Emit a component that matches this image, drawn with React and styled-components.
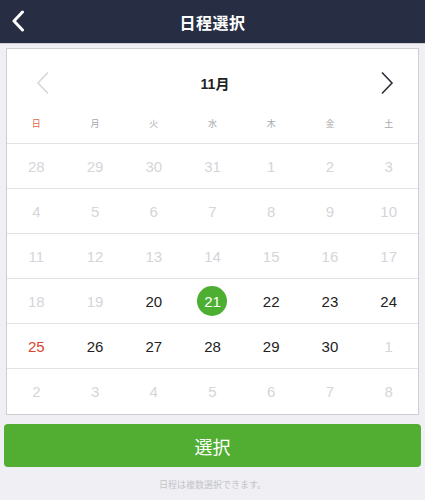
import React from 'react';
import styled, { createGlobalStyle } from 'styled-components';

const GlobalStyle = createGlobalStyle`
  html, body {
    margin: 0;
    padding: 0;
    background: #efeff4;
    font-family: "Liberation Sans", "Noto Sans CJK JP", sans-serif;
  }
  * {
    box-sizing: border-box;
  }
`;

const weekdays = ['日', '月', '火', '水', '木', '金', '土'];

const weeks = [
  [[28, 'off'], [29, 'off'], [30, 'off'], [31, 'off'], [1, 'off'], [2, 'off'], [3, 'off']],
  [[4, 'off'], [5, 'off'], [6, 'off'], [7, 'off'], [8, 'off'], [9, 'off'], [10, 'off']],
  [[11, 'off'], [12, 'off'], [13, 'off'], [14, 'off'], [15, 'off'], [16, 'off'], [17, 'off']],
  [[18, 'off'], [19, 'off'], [20, 'on'], [21, 'selected'], [22, 'on'], [23, 'on'], [24, 'on']],
  [[25, 'sunday'], [26, 'on'], [27, 'on'], [28, 'on'], [29, 'on'], [30, 'on'], [1, 'off']],
  [[2, 'off'], [3, 'off'], [4, 'off'], [5, 'off'], [6, 'off'], [7, 'off'], [8, 'off']],
];

function App() {
  return (
    <Page>
      <GlobalStyle />
      <NavBar>
        <BackButton>
          <svg width="14" height="22" viewBox="0 0 14 22">
            <path d="M11.5 2 L3 11 L11.5 20" fill="none" stroke="#fff" strokeWidth="3" strokeLinecap="round" strokeLinejoin="round" />
          </svg>
        </BackButton>
        <Title>日程選択</Title>
      </NavBar>

      <Body>
        <Card>
          <MonthBar>
            <Arrow>
              <svg width="14" height="24" viewBox="0 0 14 24">
                <path d="M12 1.5 L2 12 L12 22.5" fill="none" stroke="#d6d6da" strokeWidth="1.6" />
              </svg>
            </Arrow>
            <Month>11月</Month>
            <Arrow>
              <svg width="14" height="24" viewBox="0 0 14 24">
                <path d="M2 1.5 L12 12 L2 22.5" fill="none" stroke="#2b2f3a" strokeWidth="1.6" />
              </svg>
            </Arrow>
          </MonthBar>

          <WeekRow>
            {weekdays.map((w, i) => (
              <Weekday key={w} $sunday={i === 0}>{w}</Weekday>
            ))}
          </WeekRow>

          {weeks.map((week, wi) => (
            <DayRow key={wi}>
              {week.map(([d, kind], di) => (
                <DayCell key={di}>
                  <Day $kind={kind}>{d}</Day>
                </DayCell>
              ))}
            </DayRow>
          ))}
        </Card>

        <SelectButton>選択</SelectButton>
        <Note>日程は複数選択できます。</Note>
      </Body>
    </Page>
  );
}

export default App;

const Page = styled.div`
  width: 425px;
  height: 500px;
  background: #efeff4;
  overflow: hidden;
`;

const NavBar = styled.div`
  height: 44px;
  background: #272e43;
  display: flex;
  align-items: center;
  justify-content: center;
  position: relative;
  border-bottom: 1px solid #d0d0d6;
`;

const BackButton = styled.div`
  position: absolute;
  left: 11px;
  top: 10px;
  width: 16px;
  height: 22px;
  display: flex;
  align-items: center;
`;

const Title = styled.div`
  color: #fff;
  font-size: 16px;
  font-weight: bold;
  letter-spacing: 0.5px;
`;

const Body = styled.div`
  padding: 4px 4px 0;
  display: flex;
  flex-direction: column;
`;

const Card = styled.div`
  margin: 0 2px;
  background: #fff;
  border: 1px solid #cfcfd3;
  display: flex;
  flex-direction: column;
`;

const MonthBar = styled.div`
  height: 66px;
  display: flex;
  align-items: center;
  justify-content: space-between;
  padding: 1px 24px 0 29px;
`;

const Arrow = styled.div`
  width: 14px;
  height: 24px;
  display: flex;
`;

const Month = styled.div`
  font-size: 14px;
  font-weight: bold;
  color: #222;
`;

const WeekRow = styled.div`
  display: grid;
  grid-template-columns: repeat(7, 1fr);
  height: 29px;
  align-items: start;
  border-bottom: 1px solid #e2e2e6;
`;

const Weekday = styled.div`
  text-align: center;
  font-size: 9px;
  color: ${p => (p.$sunday ? '#e0633f' : '#a8a8ac')};
  padding-top: 2px;
`;

const DayRow = styled.div`
  display: grid;
  grid-template-columns: repeat(7, 1fr);
  height: 45px;
  border-bottom: 1px solid #e2e2e6;
  &:last-child {
    border-bottom: none;
  }
`;

const DayCell = styled.div`
  display: flex;
  align-items: center;
  justify-content: center;
`;

const dayColors = {
  off: '#d5d5d9',
  on: '#222',
  sunday: '#d9452e',
  selected: '#fff',
};

const Day = styled.div`
  width: 30px;
  height: 30px;
  border-radius: 50%;
  display: flex;
  align-items: center;
  justify-content: center;
  font-size: 15px;
  color: ${p => dayColors[p.$kind]};
  background: ${p => (p.$kind === 'selected' ? '#4caf31' : 'transparent')};
`;

const SelectButton = styled.div`
  margin-top: 9px;
  height: 43px;
  border-radius: 4px;
  background: #52ae33;
  color: #fff;
  font-size: 18px;
  display: flex;
  align-items: center;
  justify-content: center;
`;

const Note = styled.div`
  margin-top: 11px;
  text-align: center;
  font-size: 9px;
  color: #c4c4c8;
`;
